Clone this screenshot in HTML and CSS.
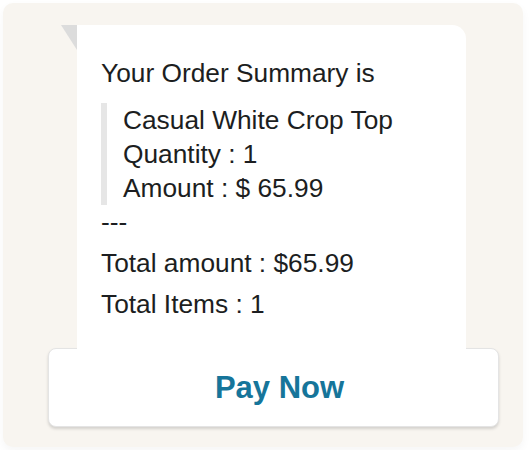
FILE: index.html
```html
<!DOCTYPE html>
<html lang="en">
<head>
    <meta charset="UTF-8">
    <meta name="viewport" content="width=device-width, initial-scale=1.0">
    <title>Order Summary</title>
    <link rel="stylesheet" href="styles.css">
</head>
<body>
    <div class="frame">
        <div class="bubble">
            <p class="title">Your Order Summary is</p>
            <div class="item">
                <div>Casual White Crop Top</div>
                <div>Quantity : 1</div>
                <div>Amount : $ 65.99</div>
            </div>
            <div class="divider">---</div>
            <p class="total">Total amount : $65.99</p>
            <p class="total">Total Items : 1</p>
        </div>
        <button class="pay-btn">Pay Now</button>
    </div>
</body>
</html>
```

FILE: styles.css
```css
body, html {
    margin: 0;
    padding: 0;
    background-color: white;
    font-family: 'Liberation Sans', Arial, sans-serif;
}

.frame {
    margin: 3px;
    width: 520px;
    height: 444px;
    box-sizing: border-box;
    padding-top: 22px;
    background-color: #f8f5f0;
    border-radius: 10px;
    box-shadow: 0 4px 10px rgba(0, 0, 0, 0.04);
}

.bubble {
    position: relative;
    margin-left: 74px;
    width: 389px;
    height: 325px;
    box-sizing: border-box;
    padding: 31px 24px 0;
    background-color: white;
    border-radius: 0 14px 0 0;
    color: #1c1e21;
    font-size: 26.3px;
}
.bubble::before {
    content: '';
    position: absolute;
    top: 0;
    left: -16px;
    border-top: 25px solid #dcdcdc;
    border-left: 16px solid transparent;
}

.title {
    margin: 0 0 13px;
    line-height: 34px;
}

.item {
    border-left: 6px solid #e6e6e6;
    padding-left: 16px;
    line-height: 34px;
}

.divider {
    line-height: 34px;
}

.total {
    margin: 7px 0 6px;
    line-height: 34px;
}

.pay-btn {
    display: block;
    margin: -2px 0 0 45px;
    padding: 0 0 0 12px;
    width: 451px;
    height: 79px;
    background-color: white;
    border: 1px solid #e4e4e4;
    border-radius: 8px;
    box-shadow: 0 2px 3px rgba(0, 0, 0, 0.15);
    color: #16759a;
    font-family: 'Liberation Sans', Arial, sans-serif;
    font-size: 31px;
    font-weight: bold;
    cursor: pointer;
}
```
